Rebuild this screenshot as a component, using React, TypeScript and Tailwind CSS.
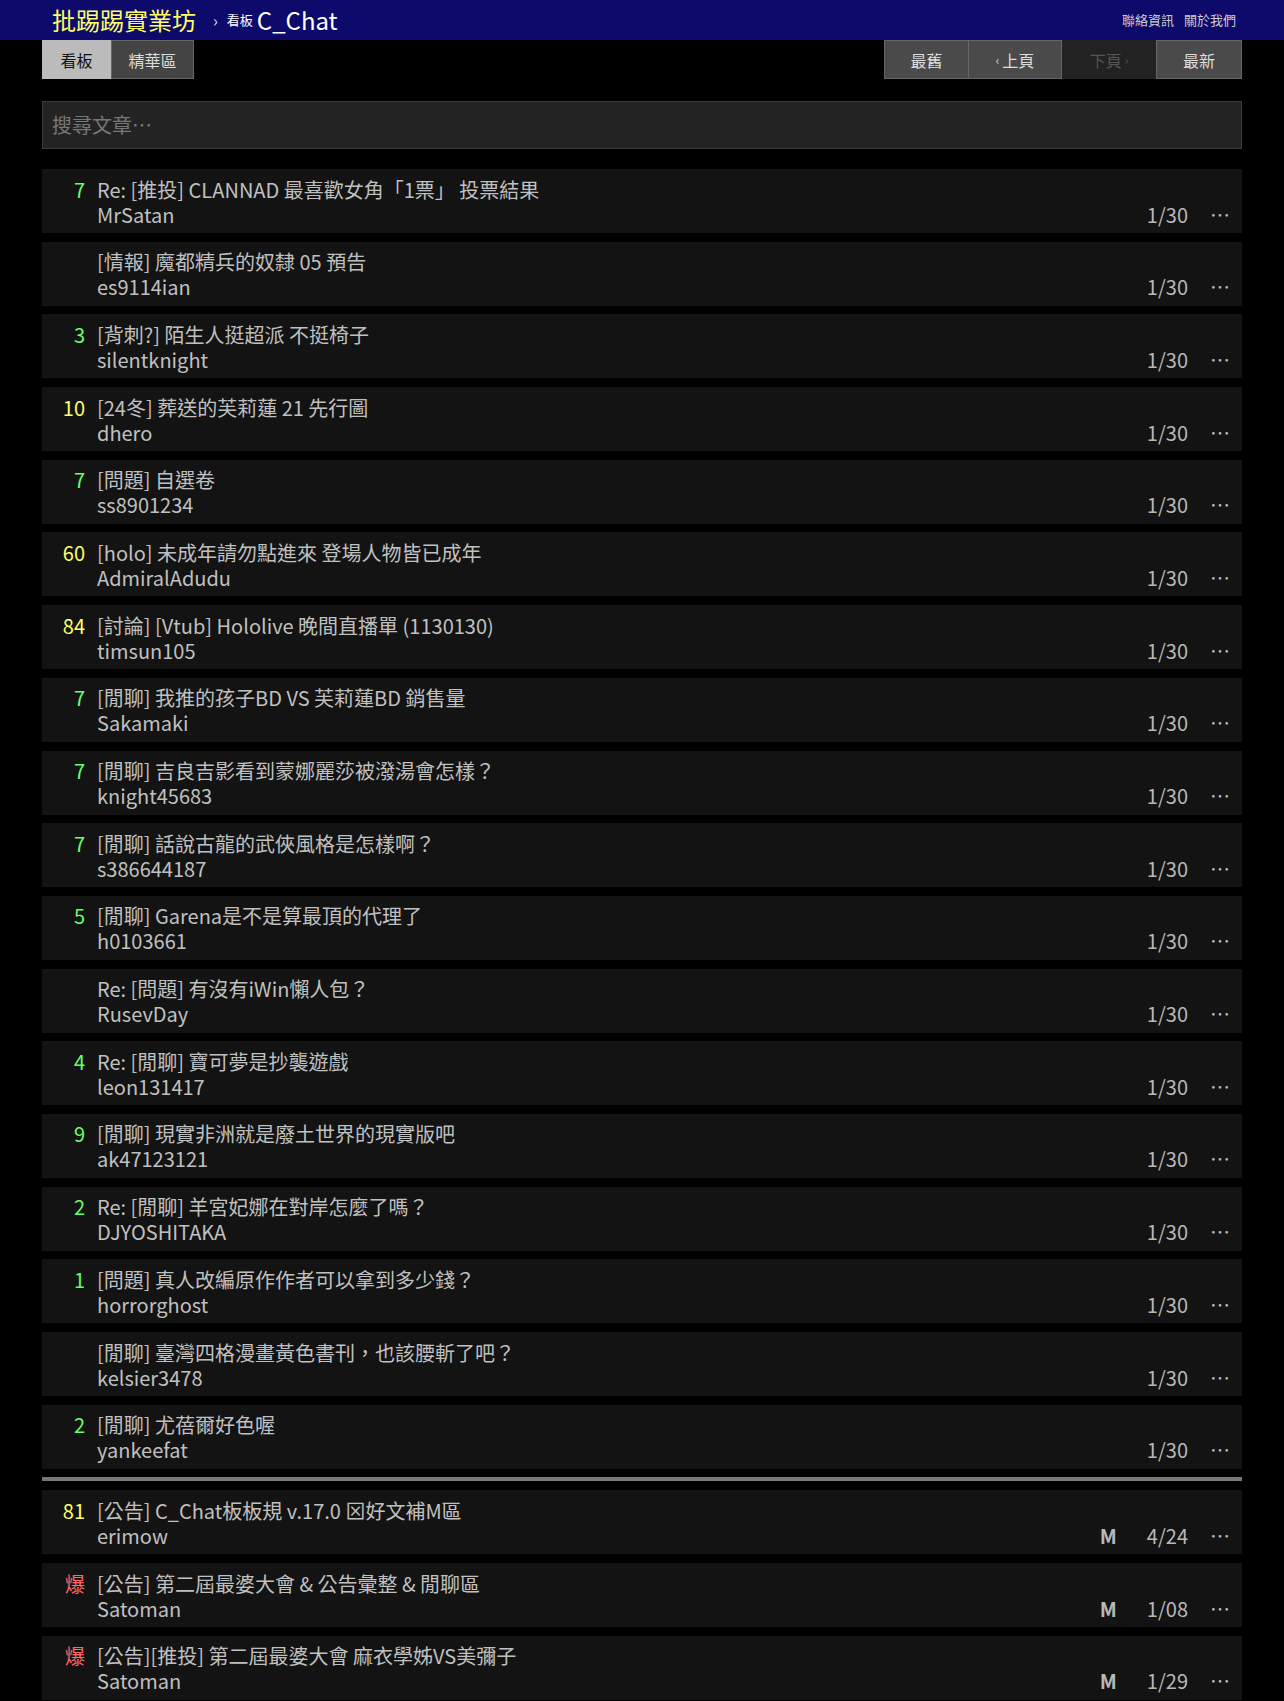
import React from "react";

interface Post {
  push: string;
  title: string;
  author: string;
  date: string;
  mark?: string;
}

const POSTS: Post[] = [
  { push: "7", title: "Re: [推投] CLANNAD 最喜歡女角「1票」 投票結果", author: "MrSatan", date: "1/30" },
  { push: "", title: "[情報] 魔都精兵的奴隸 05 預告", author: "es9114ian", date: "1/30" },
  { push: "3", title: "[背刺?] 陌生人挺超派 不挺椅子", author: "silentknight", date: "1/30" },
  { push: "10", title: "[24冬] 葬送的芙莉蓮 21 先行圖", author: "dhero", date: "1/30" },
  { push: "7", title: "[問題] 自選卷", author: "ss8901234", date: "1/30" },
  { push: "60", title: "[holo] 未成年請勿點進來 登場人物皆已成年", author: "AdmiralAdudu", date: "1/30" },
  { push: "84", title: "[討論] [Vtub] Hololive 晚間直播單 (1130130)", author: "timsun105", date: "1/30" },
  { push: "7", title: "[閒聊] 我推的孩子BD VS 芙莉蓮BD 銷售量", author: "Sakamaki", date: "1/30" },
  { push: "7", title: "[閒聊] 吉良吉影看到蒙娜麗莎被潑湯會怎樣？", author: "knight45683", date: "1/30" },
  { push: "7", title: "[閒聊] 話說古龍的武俠風格是怎樣啊？", author: "s386644187", date: "1/30" },
  { push: "5", title: "[閒聊] Garena是不是算最頂的代理了", author: "h0103661", date: "1/30" },
  { push: "", title: "Re: [問題] 有沒有iWin懶人包？", author: "RusevDay", date: "1/30" },
  { push: "4", title: "Re: [閒聊] 寶可夢是抄襲遊戲", author: "leon131417", date: "1/30" },
  { push: "9", title: "[閒聊] 現實非洲就是廢土世界的現實版吧", author: "ak47123121", date: "1/30" },
  { push: "2", title: "Re: [閒聊] 羊宮妃娜在對岸怎麼了嗎？", author: "DJYOSHITAKA", date: "1/30" },
  { push: "1", title: "[問題] 真人改編原作作者可以拿到多少錢？", author: "horrorghost", date: "1/30" },
  { push: "", title: "[閒聊] 臺灣四格漫畫黃色書刊，也該腰斬了吧？", author: "kelsier3478", date: "1/30" },
  { push: "2", title: "[閒聊] 尤蓓爾好色喔", author: "yankeefat", date: "1/30" },
];

const PINNED: Post[] = [
  { push: "81", title: "[公告] C_Chat板板規 v.17.0 ⊠好文補M區", author: "erimow", date: "4/24", mark: "M" },
  { push: "爆", title: "[公告] 第二屆最婆大會 & 公告彙整 & 閒聊區", author: "Satoman", date: "1/08", mark: "M" },
  { push: "爆", title: "[公告][推投] 第二屆最婆大會 麻衣學姊VS美彌子", author: "Satoman", date: "1/29", mark: "M" },
];

const FONT = { fontFamily: '"Noto Sans CJK TC", "Noto Sans", sans-serif' };

function pushColor(p: string) {
  if (p === "爆") return "text-[#ff6666]";
  const n = parseInt(p, 10);
  if (n >= 10) return "text-[#ffff66]";
  return "text-[#66ff66]";
}

export default function App() {
  return (
    <div className="min-h-screen bg-black text-[#c0c0c0]" style={FONT}>
      {/* Topbar */}
      <div className="bg-[#0d0a6b]">
        <div className="mx-auto flex h-[40px] max-w-[1200px] items-center pl-[10px] pr-[6px]">
          <span className="text-[24px] leading-none text-[#ffff66]">批踢踢實業坊</span>
          <span className="ml-[17px] text-[16px] text-[#dddddd]">›</span>
          <span className="ml-[9px] text-[13px] text-white">看板</span>
          <span className="ml-[4px] text-[24px] leading-none text-white">C_Chat</span>
          <div className="ml-auto flex gap-[10px] text-[13px] text-[#cccccc]">
            <span>聯絡資訊</span>
            <span>關於我們</span>
          </div>
        </div>
      </div>

      <div className="mx-auto max-w-[1200px]">
        {/* Tabs + pager */}
        <div className="flex items-start justify-between">
          <div className="flex text-[16px]">
            <span className="flex h-[39px] w-[69px] items-center justify-center border border-[#bbbbbb] bg-[#bbbbbb] text-[#111111]">
              看板
            </span>
            <span className="flex h-[39px] w-[83px] items-center justify-center border border-[#666666] bg-[#444444] text-[#dddddd]">
              精華區
            </span>
          </div>
          <div className="flex text-[16px]">
            <span className="flex h-[39px] w-[85px] items-center justify-center border border-[#666666] bg-[#4a4a4a] text-[#dddddd]">
              最舊
            </span>
            <span className="flex h-[39px] w-[93px] items-center justify-center border border-l-0 border-[#666666] bg-[#4a4a4a] text-[#dddddd]">
              <span className="mr-[3px] text-[12px]">‹</span>上頁
            </span>
            <span className="flex h-[39px] w-[94px] items-center justify-center bg-[#222222] text-[#555555]">
              下頁<span className="ml-[3px] text-[12px]">›</span>
            </span>
            <span className="flex h-[39px] w-[86px] items-center justify-center border border-[#666666] bg-[#4a4a4a] text-[#dddddd]">
              最新
            </span>
          </div>
        </div>

        {/* Search */}
        <div className="mt-[22px] flex h-[48px] items-center border border-[#3a3a3a] bg-[#232323] px-[9px] text-[20px] text-[#777777]">
          搜尋文章⋯
        </div>

        {/* List */}
        <div className="mt-[20px]">
          {POSTS.map((p, i) => (
            <Row key={i} post={p} />
          ))}
          <div className="mb-[9px] mt-[6px] h-[4px] bg-[#777777]" />
          {PINNED.map((p, i) => (
            <Row key={i} post={p} />
          ))}
        </div>
      </div>
    </div>
  );
}

function Row({ post: p }: { post: Post }) {
  return (
    <div className="mb-[8.7px] flex bg-[#131313] pb-[6.5px] pt-[7.5px] text-[20px] leading-[25px]">
      <div className={`w-[43px] shrink-0 text-right ${pushColor(p.push)}`}>{p.push}</div>
      <div className="ml-[12px] flex min-w-0 flex-1 flex-col">
        <div>{p.title}</div>
        <div className="flex items-center">
          <span>{p.author}</span>
          <div className="ml-auto flex items-center text-[#b8b8b8]">
            {p.mark && <span className="mr-[30px] font-bold">{p.mark}</span>}
            <span>{p.date}</span>
            <span className="ml-[22px] mr-[12px]">⋯</span>
          </div>
        </div>
      </div>
    </div>
  );
}
